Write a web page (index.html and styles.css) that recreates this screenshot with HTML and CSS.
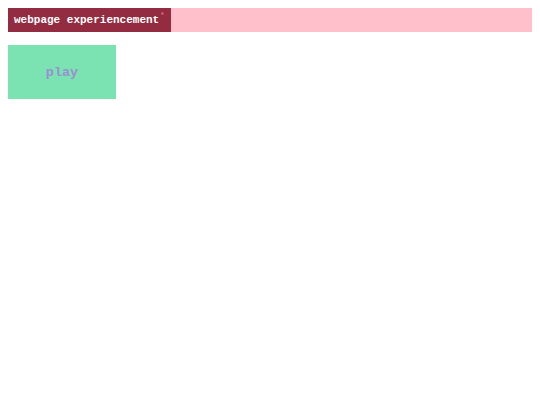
FILE: index.html
```html
<!DOCTYPE html>
<html lang="en">
<head>
  <meta charset="UTF-8" />
  <meta name="viewport" content="width=device-width, initial-scale=1.0" />
  <title>webpage experiencement</title>
  <link rel="stylesheet" href="styles.css">
</head>
<body>
  <header class="topbar">
    <div class="title">webpage experiencement<sup>*</sup></div>
  </header>

  <button class="play-btn">play</button>
</body>
</html>
```

FILE: styles.css
```css
body {
  margin: 8px;
  font-family: "Liberation Mono", monospace;
  background: #fff;
}

.topbar {
  display: flex;
  height: 24px;
  background: #ffc0cb;
}

.title {
  background: #932c41;
  color: #fff;
  font-weight: bold;
  font-size: 11px;
  line-height: 24px;
  padding: 0 7px 0 6px;
}

.title sup {
  color: #d97a8c;
  font-size: 7px;
  vertical-align: top;
  line-height: 14px;
  margin-left: 1px;
}

.play-btn {
  display: block;
  margin-top: 13px;
  width: 108px;
  height: 54px;
  border: none;
  background: #7be3b1;
  color: #9a8fd2;
  font-family: "Liberation Mono", monospace;
  font-weight: bold;
  font-size: 13.5px;
  cursor: pointer;
}
```
